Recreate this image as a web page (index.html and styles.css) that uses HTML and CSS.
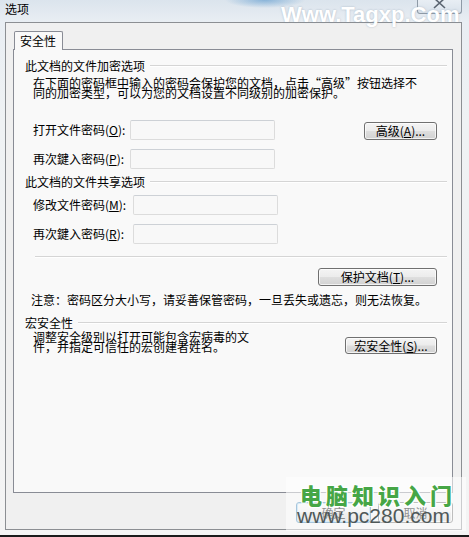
FILE: index.html
```html
<!DOCTYPE html>
<html lang="zh-CN">
<head>
<meta charset="utf-8">
<title>选项</title>
<link rel="stylesheet" href="styles.css">
</head>
<body>
<div class="titlebar">
  <span class="title">选项</span>
  <div class="close">
    <svg width="14" height="10" viewBox="0 0 14 10"><path d="M1 -2 L12 8 M12 -2 L1 8" stroke="#5a6470" stroke-width="1.6" fill="none"/></svg>
  </div>
  <span class="wm-top">Www.Tagxp.Com</span>
</div>
<div class="frame">
  <div class="tab">安全性</div>
  <div class="panel">
    <div class="group-head"><span>此文档的文件加密选项</span><i class="rule"></i></div>
    <p class="desc">在下面的密码框中输入的密码会保护您的文档，点击“高级”按钮选择不<br>同的加密类型，可以为您的文档设置不同级别的加密保护。</p>
    <div class="row first">
      <span class="label">打开文件密码(<u>O</u>):</span><span class="input"></span>
      <button class="btn adv">高级(<u>A</u>)...</button>
    </div>
    <div class="row gap9">
      <span class="label">再次鍵入密码(<u>P</u>):</span><span class="input"></span>
    </div>
    <div class="group-head gh2"><span>此文档的文件共享选项</span><i class="rule"></i></div>
    <div class="row gap7">
      <span class="label wide">修改文件密码(<u>M</u>):</span><span class="input"></span>
    </div>
    <div class="row gap9">
      <span class="label wide">再次鍵入密码(<u>R</u>):</span><span class="input"></span>
    </div>
    <i class="sep"></i>
    <div class="btnrow"><button class="btn protect">保护文档(<u>T</u>)...</button></div>
    <p class="note">注意：密码区分大小写，请妥善保管密码，一旦丢失或遗忘，则无法恢复。</p>
    <div class="group-head gh3"><span>宏安全性</span><i class="rule"></i></div>
    <div class="macro">
      <p class="mdesc">调整安全级别以打开可能包含宏病毒的文<br>件，并指定可信任的宏创建者姓名。</p>
      <button class="btn msec">宏安全性(<u>S</u>)...</button>
    </div>
  </div>
  <div class="footer">
    <button class="btn fbtn ok">确定</button>
    <button class="btn fbtn">取消</button>
  </div>
</div>
<div class="wm-bottom">
  <div class="wm-cn">电脑知识入门</div>
  <div class="wm-en">www.pc280.com</div>
</div>
<i class="bottom-edge"></i>
</body>
</html>
```

FILE: styles.css
```css
* { box-sizing: border-box; margin: 0; padding: 0; }
html, body { width: 469px; height: 537px; overflow: hidden; }
body {
  font-family: "Noto Sans CJK SC", "Liberation Sans", sans-serif;
  font-size: 12px;
  color: #000;
  position: relative;
  background:
    radial-gradient(ellipse 40px 8px at 265px 0px, rgba(70,140,200,0.55), rgba(70,140,200,0) 100%),
    linear-gradient(#dbe4ed 0px, #e9eef3 22px, #eff2f4 120px, #f4f4f4 537px);
}
u { text-decoration: underline; text-underline-offset: 1px; }

.titlebar { height: 22px; display: flex; align-items: flex-start; position: relative; }
.title { padding: 3px 0 0 5px; line-height: 12px; }
.close {
  margin-left: auto; margin-right: 7px;
  width: 45px; height: 14px;
  border: 1px solid #8e9aa6; border-top: none;
  border-radius: 0 0 3px 3px;
  display: flex; justify-content: center;
  background: linear-gradient(#e8eef4, #d9e2eb);
}
.wm-top {
  position: absolute; left: 281px; top: 2px;
  font-family: "Liberation Sans", sans-serif; font-weight: bold; font-size: 22px;
  line-height: 26px;
  color: #fff;
  text-shadow: 0 0 2px rgba(120,140,160,0.55);
}

.frame {
  margin-left: 5px; width: 457px; height: 508px;
  border: 1px solid #8c8f93;
  background: #f0f0f0;
  padding: 8px 0 0 7px;
  display: flex; flex-direction: column;
}
.tab {
  margin-left: 1px; width: 49px; height: 19px;
  border: 1px solid #898c95; border-bottom: none;
  border-radius: 2px 2px 0 0;
  background: #f9f9f9;
  position: relative; z-index: 1; margin-bottom: -1px;
  padding: 3px 0 0 5px; line-height: 12px;
}
.panel {
  width: 440px; height: 444px;
  border: 1px solid #898c95;
  background: #f9f9f9;
  padding: 10px 5px 0 11px;
}
.group-head { display: flex; align-items: center; line-height: 12px; height: 12px; }
.group-head .rule {
  flex: 1; height: 2px; margin-left: 5px;
  border-top: 1px solid #d5d5d5; border-bottom: 1px solid #ffffff;
}
.gh2 { margin-top: 7px; }
.gh3 { margin-top: 11px; }
.desc { margin-top: 6px; padding-left: 8px; line-height: 10px; height: 20px; }

.row { display: flex; align-items: flex-start; padding-left: 8px; height: 20px; }
.row.first { margin-top: 22px; }
.gap9 { margin-top: 9px; }
.gap7 { margin-top: 7px; }
.label { width: 97px; line-height: 20px; }
.label.wide { width: 100px; }
.input {
  width: 145px; height: 20px;
  border: 1px solid #dcdcdc; border-top-color: #cdd1d6;
  border-radius: 2px;
  background: #f8f8f8;
}

.btn {
  font-family: "Noto Sans CJK SC", "Liberation Sans", sans-serif;
  font-size: 12px; line-height: 16px; color: #000;
  height: 18px;
  border: 1px solid #707070; border-radius: 3px;
  background: linear-gradient(#f4f4f4 0%, #ececec 48%, #dedede 52%, #d2d2d2 100%);
  text-align: center;
  box-shadow: inset 0 0 0 1px rgba(255,255,255,0.7);
}
.adv { width: 73px; margin-left: auto; margin-right: 10px; margin-top: 2px; }
.sep {
  display: block; margin: 12px 0 0 10px; height: 2px;
  border-top: 1px solid #d5d5d5; border-bottom: 1px solid #ffffff;
}
.btnrow { display: flex; justify-content: flex-end; margin-top: 10px; padding-right: 10px; }
.protect { width: 119px; }
.note { margin-top: 8px; padding-left: 6px; line-height: 12px; }
.macro { display: flex; align-items: flex-start; margin-top: 3px; }
.mdesc { padding-left: 8px; line-height: 10px; }
.msec { width: 92px; margin-left: auto; margin-right: 10px; margin-top: 5px; height: 17px; line-height: 15px; }

.footer { display: flex; justify-content: flex-end; gap: 7px; padding-right: 8px; margin-top: 9px; }
.fbtn { width: 75px; height: 21px; line-height: 19px; }
.ok { border-color: #3c7fb1; box-shadow: inset 0 0 0 1px #a6d4f0; }

.wm-bottom {
  position: absolute; left: 286px; top: 477px; width: 180px; height: 54px;
  background: rgba(255,255,255,0.55);
  padding: 5px 0 0 14px;
}
.wm-cn {
  font-family: "Noto Sans CJK SC", sans-serif; font-weight: 900;
  font-size: 22px; line-height: 24px; letter-spacing: 4px;
  color: #46a646;
  text-shadow: 1px 1px 0 #fff, -1px -1px 0 #fff, 1px -1px 0 #fff, -1px 1px 0 #fff;
}
.wm-en {
  margin-left: -3px;
  font-family: "Liberation Sans", sans-serif;
  font-size: 21px; line-height: 20px;
  color: #4f5858;
}
.bottom-edge {
  position: absolute; left: 0; right: 0; bottom: 0; height: 2px;
  background: #1a1a1a;
}
```
